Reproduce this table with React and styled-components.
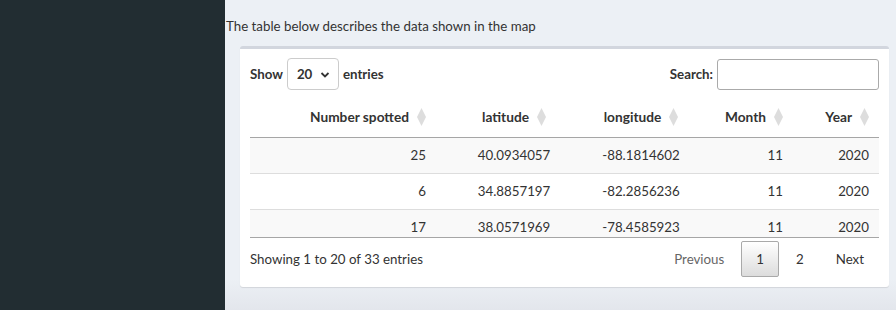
import React from "react";
import styled, { createGlobalStyle } from "styled-components";

const GlobalStyle = createGlobalStyle`
	html, body {
		margin: 0;
		padding: 0;
		background: #ecf0f5;
	}
	body {
		font-family: Lato, "Noto Sans", sans-serif;
		font-size: 13.3px;
		color: #333;
	}
`;

const Layout = styled.div`
	display: flex;
	height: 310px;
	overflow: hidden;
`;

const Sidebar = styled.aside`
	width: 225px;
	flex-shrink: 0;
	background: #222d32;
`;

const Content = styled.main`
	flex: 1;
	background: linear-gradient(to bottom, #ecf0f5 0%, #ecf0f5 90%, #e3e6ec 100%);
`;

const Intro = styled.p`
	margin: 16px 0 0 1px;
	line-height: 20px;
`;

const Box = styled.section`
	margin: 10px 7px 0 15px;
	background: #fff;
	border-top: 3px solid #d2d6de;
	border-radius: 3px;
	box-shadow: 0 1px 1px rgba(0, 0, 0, 0.1);
	padding: 9px 10px 10px;
`;

const Controls = styled.div`
	display: flex;
	justify-content: space-between;
	align-items: center;
	height: 32px;
`;

const ControlLabel = styled.label`
	display: flex;
	align-items: center;
	gap: 4px;
	font-weight: 700;
`;

const LengthSelect = styled.div`
	position: relative;
	width: 52px;
	height: 32px;
	box-sizing: border-box;
	border: 1px solid #ccc;
	border-radius: 4px;
	padding: 0 0 0 9px;
	display: flex;
	align-items: center;
	font-weight: 700;

	svg {
		position: absolute;
		right: 8px;
		top: 12px;
	}
`;

const SearchInput = styled.input`
	width: 162px;
	height: 31px;
	box-sizing: border-box;
	border: 1px solid #aaa;
	border-radius: 3px;
	margin: 0;
`;

const Table = styled.table`
	width: 100%;
	border-collapse: collapse;
	table-layout: fixed;
`;

const HeadWrap = styled.div`
	margin-top: 6px;
	border-bottom: 1px solid #a6a6a6;
`;

const Th = styled.th`
	padding: 11px 10px 10px;
	line-height: 20px;
	font-size: 13.7px;
	font-weight: 700;
	text-align: ${p => p.$align || "left"};
	white-space: nowrap;

	svg {
		margin-left: 8px;
		vertical-align: -4px;
	}
`;

const ScrollBody = styled.div`
	height: 99px;
	overflow: hidden;
	border-bottom: 1px solid #a6a6a6;
`;

const Row = styled.tr`
	background: ${p => (p.$odd ? "#f9f9f9" : "#fff")};
	border-top: ${p => (p.$first ? "none" : "1px solid #ddd")};
`;

const Td = styled.td`
	padding: 8px 10px;
	line-height: 19px;
	text-align: ${p => p.$align || "left"};
`;

const Footer = styled.div`
	display: flex;
	justify-content: space-between;
	align-items: center;
	margin-top: 3px;
`;

const Info = styled.div`
	line-height: 20px;
`;

const Pager = styled.div`
	display: flex;
	align-items: center;
`;

const PageButton = styled.span`
	box-sizing: border-box;
	height: 36px;
	padding: 0 14px;
	margin-left: 2px;
	display: flex;
	align-items: center;
	justify-content: center;
	border-radius: 2px;
	border: 1px solid ${p => (p.$current ? "#a9a9a9" : "transparent")};
	background: ${p =>
		p.$current ? "linear-gradient(to bottom, #fff 0%, #dcdcdc 100%)" : "transparent"};
	color: ${p => (p.$disabled ? "#666" : "#333")};
`;

const SortIcon = () => (
	<svg width="9" height="18" viewBox="0 0 9 18">
		<polygon points="4.5,0 9,9 4.5,18 0,9" fill="#ddd" />
	</svg>
);

const Chevron = () => (
	<svg width="10" height="8" viewBox="0 0 10 8">
		<path d="M1.5 2 L5 5.5 L8.5 2" fill="none" stroke="#333" strokeWidth="1.8" />
	</svg>
);

const columns = [
	{ label: "Number spotted", width: 186, align: "right" },
	{ label: "latitude", width: 156, align: "center" },
	{ label: "longitude", width: 98, align: "center" },
	{ label: "Month", width: 103, align: "right" },
	{ label: "Year", width: 86, align: "right" }
];

const rows = [
	[25, "40.0934057", "-88.1814602", 11, 2020],
	[6, "34.8857197", "-82.2856236", 11, 2020],
	[17, "38.0571969", "-78.4585923", 11, 2020]
];

const Cols = () => (
	<colgroup>
		{columns.map(c => (
			<col key={c.label} style={{ width: c.width }} />
		))}
	</colgroup>
);

const App = () => {
	return (
		<Layout>
			<GlobalStyle />
			<Sidebar />
			<Content>
				<Intro>The table below describes the data shown in the map</Intro>
				<Box>
					<Controls>
						<ControlLabel>
							Show
							<LengthSelect>
								20
								<Chevron />
							</LengthSelect>
							entries
						</ControlLabel>
						<ControlLabel>
							Search:
							<SearchInput type="search" />
						</ControlLabel>
					</Controls>

					<HeadWrap>
						<Table>
							<Cols />
							<thead>
								<tr>
									{columns.map(c => (
										<Th key={c.label} $align={c.align}>
											{c.label}
											<SortIcon />
										</Th>
									))}
								</tr>
							</thead>
						</Table>
					</HeadWrap>

					<ScrollBody>
						<Table>
							<Cols />
							<tbody>
								{rows.map((r, i) => (
									<Row key={i} $odd={i % 2 === 0} $first={i === 0}>
										{r.map((v, j) => (
											<Td key={j} $align={columns[j].align}>
												{v}
											</Td>
										))}
									</Row>
								))}
							</tbody>
						</Table>
					</ScrollBody>

					<Footer>
						<Info>Showing 1 to 20 of 33 entries</Info>
						<Pager>
							<PageButton $disabled>Previous</PageButton>
							<PageButton $current>1</PageButton>
							<PageButton>2</PageButton>
							<PageButton>Next</PageButton>
						</Pager>
					</Footer>
				</Box>
			</Content>
		</Layout>
	);
};

export default App;
